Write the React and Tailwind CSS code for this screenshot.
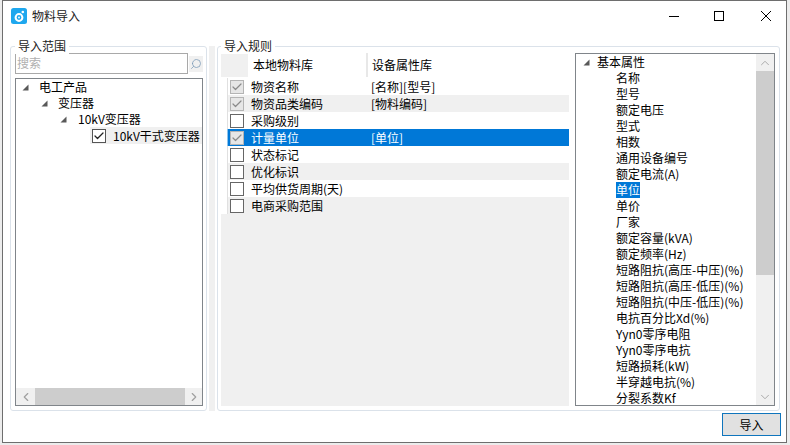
import React from "react";
import { Check, ChevronLeft, ChevronRight, ChevronUp, ChevronDown, Search } from "lucide-react";

const rules = [
  { name: "物资名称", attr: "[名称][型号]", state: "on" },
  { name: "物资品类编码", attr: "[物料编码]", state: "on" },
  { name: "采购级别", attr: "", state: "off" },
  { name: "计量单位", attr: "[单位]", state: "on", selected: true },
  { name: "状态标记", attr: "", state: "off" },
  { name: "优化标识", attr: "", state: "off" },
  { name: "平均供货周期(天)", attr: "", state: "off" },
  { name: "电商采购范围", attr: "", state: "off" },
];

const attrs = [
  "名称", "型号", "额定电压", "型式", "相数", "通用设备编号", "额定电流(A)", "单位", "单价", "厂家",
  "额定容量(kVA)", "额定频率(Hz)", "短路阻抗(高压-中压)(%)", "短路阻抗(高压-低压)(%)", "短路阻抗(中压-低压)(%)",
  "电抗百分比Xd(%)", "Yyn0零序电阻", "Yyn0零序电抗", "短路损耗(kW)", "半穿越电抗(%)", "分裂系数Kf",
];

function Arrow() {
  return (
    <svg width="7" height="7" viewBox="0 0 7 7" className="shrink-0">
      <polygon points="6.5,0.5 6.5,6.5 0.5,6.5" fill="#595959" />
    </svg>
  );
}

function Box({ state }) {
  if (state === "off") return <div className="w-[14px] h-[14px] border border-[#666] bg-white shrink-0" />;
  return (
    <div className="w-[14px] h-[14px] border border-[#b4b4b4] bg-[#e6e6e6] shrink-0 flex items-center justify-center">
      <Check size={12} strokeWidth={2.4} className="text-[#8a8a8a]" />
    </div>
  );
}

function Group({ title, titleClass, className, children }) {
  return (
    <div className={`relative h-[365px] border border-[#dbe2ea] rounded-[3px] bg-white ${className}`}>
      <div className={`absolute -top-[9px] bg-white px-[3px] leading-[16px] text-[#222] ${titleClass}`}>{title}</div>
      {children}
    </div>
  );
}

function TreeRow({ pad, arrow, children }) {
  return (
    <div className={`flex items-center h-[16px] whitespace-nowrap ${pad}`}>
      <Arrow />
      <span className={arrow}>{children}</span>
    </div>
  );
}

export default function App() {
  return (
    <div className="w-[790px] h-[445px] bg-[#ececec] pl-[2px] pr-[3px] pb-[2px] overflow-hidden font-['Noto_Sans_CJK_SC',sans-serif] text-[12px] leading-[16px] text-black">
      <div className="h-[443px] bg-white border border-[#6e6e6e] flex flex-col">
        {/* title bar */}
        <div className="h-[29px] shrink-0 flex items-center pl-[8px]">
          <svg width="16" height="16" viewBox="0 0 16 16" className="shrink-0">
            <rect width="16" height="16" rx="2.5" fill="#1ea7ee" />
            <circle cx="8" cy="9.5" r="3.4" fill="none" stroke="#fff" strokeWidth="2" />
            <circle cx="8" cy="9.5" r="0.9" fill="#fff" />
            <circle cx="11.8" cy="4" r="1.3" fill="#fff" />
          </svg>
          <span className="ml-[5px] text-[#222]">物料导入</span>
          <div className="ml-auto flex items-center pr-[15px] gap-[35px]">
            <svg width="10" height="10" viewBox="0 0 10 10" shapeRendering="crispEdges">
              <rect x="0" y="5" width="10" height="1" fill="#000" />
            </svg>
            <svg width="10" height="10" viewBox="0 0 10 10" shapeRendering="crispEdges">
              <rect x="0.5" y="0.5" width="9" height="9" fill="none" stroke="#000" />
            </svg>
            <svg width="10" height="10" viewBox="0 0 10 10" className="ml-[2px]">
              <path d="M0 0L10 10M10 0L0 10" stroke="#000" strokeWidth="1" />
            </svg>
          </div>
        </div>

        {/* body */}
        <div className="flex pl-[7px] pt-[16px]">
          <Group title="导入范围" titleClass="left-[4px]" className="w-[197px] flex flex-col pl-[4px] pr-[3px] pt-[6px] pb-[4px]">
            <div className="flex items-center gap-[1px] h-[21px] shrink-0">
              <div className="w-[173px] h-[21px] border border-[#a9a9a9] pl-[1px] leading-[18px] text-[#b0b0b0]">搜索</div>
              <div className="w-[14px] h-[16px] bg-[#f0f0f0] flex items-center justify-center">
                <Search size={12} strokeWidth={1.6} className="text-[#7f9db9] -scale-x-100" />
              </div>
            </div>
            <div className="mt-[4px] flex-1 border border-[#80858a] flex flex-col">
              <div className="flex-1 overflow-hidden">
                <TreeRow pad="pl-[6px]" arrow="ml-[10px]">电工产品</TreeRow>
                <TreeRow pad="pl-[25px]" arrow="ml-[10px]">变压器</TreeRow>
                <TreeRow pad="pl-[44px]" arrow="ml-[11px]">10kV变压器</TreeRow>
                <div className="flex items-center h-[17px] ml-[74px] pl-[2px] bg-[#f0f0f0] whitespace-nowrap">
                  <div className="w-[14px] h-[14px] border border-[#555] bg-white shrink-0 flex items-center justify-center">
                    <Check size={12} strokeWidth={2.6} className="text-[#222]" />
                  </div>
                  <span className="ml-[7px]">10kV干式变压器</span>
                </div>
              </div>
              <div className="h-[17px] shrink-0 flex bg-[#f0f0f0]">
                <div className="w-[19px] flex items-center justify-center"><ChevronLeft size={14} strokeWidth={2} className="text-[#a0a0a0]" /></div>
                <div className="w-[150px] bg-[#cdcdcd]" />
                <div className="flex-1 flex items-center justify-center"><ChevronRight size={14} strokeWidth={2} className="text-[#a0a0a0]" /></div>
              </div>
            </div>
          </Group>

          <div className="w-[6px] h-[365px] mx-[2px] bg-[#f0f0f0]" />

          <Group title="导入规则" titleClass="left-[3px]" className="w-[563px] flex pl-[3px] pr-[4px] pt-[6px] pb-[4px]">
            {/* data grid */}
            <div className="w-[348px] bg-[#f0f0f0] flex flex-col">
              <div className="flex h-[25px] shrink-0 border-b border-white">
                <div className="w-[27px] bg-[#f0f0f0] shrink-0" />
                <div className="w-[120px] bg-white border-r-2 border-[#e8e8e8] pl-[5px] flex items-center">本地物料库</div>
                <div className="flex-1 bg-white pl-[4px] flex items-center">设备属性库</div>
              </div>
              {rules.map((r, i) => (
                <div key={r.name} className="flex h-[17px] shrink-0">
                  <div className={`w-[7px] shrink-0 border-r ${r.selected ? "border-[#8cc4ee]" : "border-[#e0e0e0]"} bg-white`} />
                  <div className={`flex flex-1 items-center ${r.selected ? "bg-[#0078d7] text-white" : i % 2 ? "bg-[#f0f0f0]" : "bg-white"}`}>
                    <div className="w-[23px] pl-[2px] shrink-0"><Box state={r.state} /></div>
                    <div className="w-[120px] whitespace-nowrap">{r.name}</div>
                    <div className="flex-1 whitespace-nowrap">{r.attr}</div>
                  </div>
                </div>
              ))}
            </div>

            {/* attribute tree */}
            <div className="ml-[6px] w-[200px] border border-[#80858a] flex overflow-hidden">
              <div className="flex-1 min-w-0 whitespace-nowrap overflow-hidden">
                <TreeRow pad="pl-[7px]" arrow="ml-[7px]">基本属性</TreeRow>
                {attrs.map((a) => (
                  <div key={a} className="h-[16px] pl-[40px]">
                    <span className={a === "单位" ? "bg-[#0078d7] text-white inline-block" : "inline-block"}>{a}</span>
                  </div>
                ))}
              </div>
              <div className="w-[18px] shrink-0 bg-[#f0f0f0] flex flex-col">
                <div className="h-[17px] flex items-center justify-center"><ChevronUp size={14} strokeWidth={1.5} className="text-[#a0a0a0]" /></div>
                <div className="h-[204px] bg-[#cdcdcd]" />
                <div className="flex-1" />
                <div className="h-[17px] flex items-center justify-center"><ChevronDown size={14} strokeWidth={1.5} className="text-[#a0a0a0]" /></div>
              </div>
            </div>
          </Group>
        </div>

        {/* footer */}
        <div className="flex justify-end pr-[5px] pt-[2px]">
          <button className="w-[59px] h-[23px] border border-[#0f75bd] bg-[#e1e1e1] leading-[16px]">导入</button>
        </div>
      </div>
    </div>
  );
}
